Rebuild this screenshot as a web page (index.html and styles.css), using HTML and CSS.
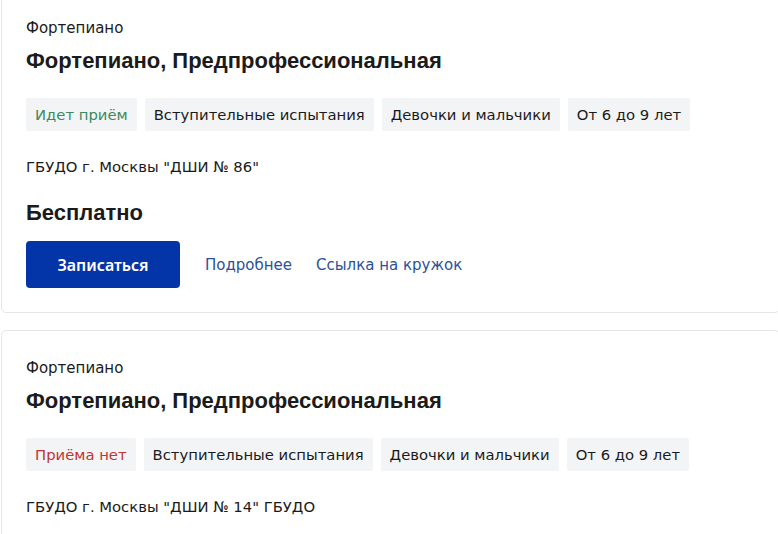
FILE: index.html
```html
<!DOCTYPE html>
<html lang="ru">
<head>
<meta charset="utf-8">
<link rel="stylesheet" href="styles.css">
</head>
<body>
<div class="list">
  <div class="card">
    <div class="category">Фортепиано</div>
    <div class="title">Фортепиано, Предпрофессиональная</div>
    <div class="tags">
      <span class="tag tag-open">Идет приём</span>
      <span class="tag">Вступительные испытания</span>
      <span class="tag">Девочки и мальчики</span>
      <span class="tag">От 6 до 9 лет</span>
    </div>
    <div class="org">ГБУДО г. Москвы "ДШИ № 86"</div>
    <div class="price">Бесплатно</div>
    <div class="actions">
      <button class="btn">Записаться</button>
      <a class="link" href="#">Подробнее</a>
      <a class="link" href="#">Ссылка на кружок</a>
    </div>
  </div>
  <div class="card">
    <div class="category">Фортепиано</div>
    <div class="title">Фортепиано, Предпрофессиональная</div>
    <div class="tags">
      <span class="tag tag-closed">Приёма нет</span>
      <span class="tag">Вступительные испытания</span>
      <span class="tag">Девочки и мальчики</span>
      <span class="tag">От 6 до 9 лет</span>
    </div>
    <div class="org">ГБУДО г. Москвы "ДШИ № 14" ГБУДО</div>
  </div>
</div>
</body>
</html>
```
FILE: styles.css
```css
html, body {
  margin: 0;
  padding: 0;
  background: #ffffff;
  overflow: hidden;
}
body {
  font-family: "DejaVu Sans", "Noto Sans", sans-serif;
  color: #1b1b1b;
}
.list {
  margin-top: -10px;
  padding-left: 1px;
  display: flex;
  flex-direction: column;
  gap: 17px;
}
.card {
  width: 779px;
  box-sizing: border-box;
  border: 1px solid #e6e6e6;
  border-radius: 5px;
  padding: 27px 25px 24px 24px;
}
.category {
  font-size: 15px;
  line-height: 20px;
}
.title {
  margin-top: 9px;
  font-family: "Liberation Sans", Arial, sans-serif;
  font-weight: bold;
  font-size: 22px;
  line-height: 28px;
}
.tags {
  margin-top: 23px;
  display: flex;
  gap: 8px;
}
.tag {
  background: #f3f4f6;
  font-size: 14.8px;
  line-height: 33px;
  padding: 0 9px;
  border-radius: 2px;
}
.tag-open { color: #3b8a5d; }
.tag-closed { color: #c03535; }
.org {
  margin-top: 26px;
  font-size: 14.8px;
  line-height: 20px;
}
.price {
  margin-top: 22px;
  font-family: "Liberation Sans", Arial, sans-serif;
  font-weight: bold;
  font-size: 22px;
  line-height: 28px;
}
.actions {
  margin-top: 14px;
  display: flex;
  align-items: center;
  gap: 24px;
}
.btn {
  width: 154px;
  height: 47px;
  background: #0435a8;
  color: #ffffff;
  border: none;
  border-radius: 4px;
  font-family: "Noto Sans", sans-serif;
  font-size: 16px;
  font-weight: 600;
  margin-right: 1px;
}
.link {
  color: #2b5299;
  text-decoration: none;
  font-size: 15px;
}
```
